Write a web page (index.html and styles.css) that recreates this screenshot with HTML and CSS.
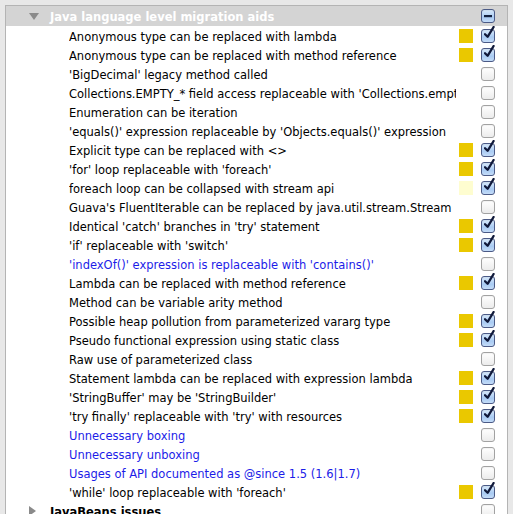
FILE: index.html
```html
<!DOCTYPE html>
<html>
<head>
<meta charset="utf-8">
<link rel="stylesheet" href="styles.css">
</head>
<body>
<div class="panel">
  <div class="group open">
    <span class="arrow down"></span>
    <span class="gname">Java language level migration aids</span>
    <span class="sev"></span>
    <span class="cb mixed"><svg viewBox="0 0 14 14" width="14" height="14"><rect x="3" y="6" width="8" height="2.2" fill="#14213f"/></svg></span>
  </div>
  <div class="rows">
    <div class="row"><span class="name">Anonymous type can be replaced with lambda</span><span class="sev y"></span><span class="cb on"></span></div>
    <div class="row"><span class="name">Anonymous type can be replaced with method reference</span><span class="sev y"></span><span class="cb on"></span></div>
    <div class="row"><span class="name">'BigDecimal' legacy method called</span><span class="sev"></span><span class="cb"></span></div>
    <div class="row"><span class="name">Collections.EMPTY_* field access replaceable with 'Collections.emptyList()'</span><span class="sev"></span><span class="cb"></span></div>
    <div class="row"><span class="name">Enumeration can be iteration</span><span class="sev"></span><span class="cb"></span></div>
    <div class="row"><span class="name">'equals()' expression replaceable by 'Objects.equals()' expression</span><span class="sev"></span><span class="cb"></span></div>
    <div class="row"><span class="name">Explicit type can be replaced with &lt;&gt;</span><span class="sev y"></span><span class="cb on"></span></div>
    <div class="row"><span class="name">'for' loop replaceable with 'foreach'</span><span class="sev y"></span><span class="cb on"></span></div>
    <div class="row"><span class="name">foreach loop can be collapsed with stream api</span><span class="sev py"></span><span class="cb on"></span></div>
    <div class="row"><span class="name">Guava's FluentIterable can be replaced by java.util.stream.Stream</span><span class="sev"></span><span class="cb"></span></div>
    <div class="row"><span class="name">Identical 'catch' branches in 'try' statement</span><span class="sev y"></span><span class="cb on"></span></div>
    <div class="row"><span class="name">'if' replaceable with 'switch'</span><span class="sev y"></span><span class="cb on"></span></div>
    <div class="row"><span class="name blue">'indexOf()' expression is replaceable with 'contains()'</span><span class="sev"></span><span class="cb"></span></div>
    <div class="row"><span class="name">Lambda can be replaced with method reference</span><span class="sev y"></span><span class="cb on"></span></div>
    <div class="row"><span class="name">Method can be variable arity method</span><span class="sev"></span><span class="cb"></span></div>
    <div class="row"><span class="name">Possible heap pollution from parameterized vararg type</span><span class="sev y"></span><span class="cb on"></span></div>
    <div class="row"><span class="name">Pseudo functional expression using static class</span><span class="sev y"></span><span class="cb on"></span></div>
    <div class="row"><span class="name">Raw use of parameterized class</span><span class="sev"></span><span class="cb"></span></div>
    <div class="row"><span class="name">Statement lambda can be replaced with expression lambda</span><span class="sev y"></span><span class="cb on"></span></div>
    <div class="row"><span class="name">'StringBuffer' may be 'StringBuilder'</span><span class="sev y"></span><span class="cb on"></span></div>
    <div class="row"><span class="name">'try finally' replaceable with 'try' with resources</span><span class="sev y"></span><span class="cb on"></span></div>
    <div class="row"><span class="name blue">Unnecessary boxing</span><span class="sev"></span><span class="cb"></span></div>
    <div class="row"><span class="name blue">Unnecessary unboxing</span><span class="sev"></span><span class="cb"></span></div>
    <div class="row"><span class="name blue">Usages of API documented as @since 1.5 (1.6|1.7)</span><span class="sev"></span><span class="cb"></span></div>
    <div class="row"><span class="name">'while' loop replaceable with 'foreach'</span><span class="sev y"></span><span class="cb on"></span></div>
  </div>
  <div class="group closed">
    <span class="arrow right"></span>
    <span class="gname">JavaBeans issues</span>
    <span class="sev"></span>
    <span class="cb"></span>
  </div>
</div>
</body>
</html>
```
FILE: styles.css
```css
html, body {
  margin: 0;
  padding: 0;
  background: #e8e8e8;
  overflow: hidden;
  height: 514px;
}
body {
  padding: 5px 0 0 5px;
  font-family: "DejaVu Sans", "Liberation Sans", sans-serif;
  font-size: 11.5px;
}
.panel {
  width: 501px;
  height: 540px;
  background: #fff;
  border: 1px solid #b4b4b4;
  border-bottom: none;
}
.group {
  display: flex;
  align-items: center;
  height: 20px;
  padding-left: 23px;
}
.group.open {
  background: #d4d4d4;
}
.group.closed {
  height: 19px;
}
.gname {
  font-weight: bold;
  flex: 1;
  margin-left: 11px;
  white-space: nowrap;
  padding-top: 2px;
}
.open .gname { color: #fff; }
.closed .gname { color: #000; }
.arrow {
  width: 10px;
  height: 8px;
  display: inline-block;
}
.arrow.down {
  border-left: 5px solid transparent;
  border-right: 5px solid transparent;
  border-top: 7px solid #8a8a8a;
  width: 0; height: 0;
}
.arrow.right {
  border-top: 5px solid transparent;
  border-bottom: 5px solid transparent;
  border-left: 7px solid #8a8a8a;
  width: 0; height: 0;
  margin-right: 3px;
}
.rows { display: flex; flex-direction: column; }
.row {
  display: flex;
  align-items: center;
  height: 19px;
  padding-left: 63px;
}
.name {
  flex: 1;
  min-width: 0;
  overflow: hidden;
  white-space: nowrap;
  color: #000;
  margin-right: 3px;
  padding-top: 2px;
}
.name.blue { color: #1c1ce8; }
.sev {
  width: 14px;
  height: 14px;
  flex: none;
  margin-right: 8px;
}
.sev.y { background: #eac800; }
.sev.py { background: #fefdd0; }
.cb {
  position: relative;
  width: 14px;
  height: 14px;
  box-sizing: border-box;
  flex: none;
  margin-right: 12px;
  border: 1px solid #a2a2a2;
  border-radius: 3px;
  background: linear-gradient(#ffffff, #ececec);
  box-shadow: inset 0 1px 1px rgba(0,0,0,0.05);
}
.cb svg { position: absolute; left: -1px; top: -1px; }
.cb.on, .cb.mixed {
  border-color: #4b5a86;
  background: linear-gradient(#d9eafb, #a9cbf3 60%, #c4dcf8);
}
.cb.on::after {
  content: "";
  position: absolute;
  left: 2px;
  top: -4px;
  width: 11px;
  height: 14px;
  background: no-repeat center/contain url("data:image/svg+xml;utf8,<svg xmlns='http://www.w3.org/2000/svg' viewBox='0 0 11 14'><path d='M1 8.2 L3.6 10.8 L9.6 1' fill='none' stroke='%2310193a' stroke-width='2.3' stroke-linecap='round' stroke-linejoin='round'/></svg>");
}
```
